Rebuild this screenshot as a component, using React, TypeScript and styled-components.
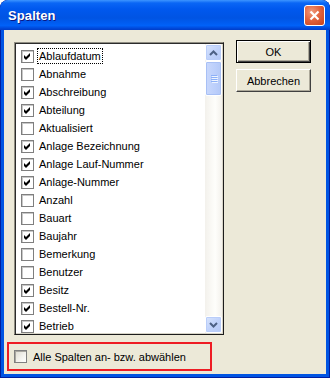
import React from "react";
import styled, { createGlobalStyle } from "styled-components";

const GlobalStyle = createGlobalStyle`
  html, body {
    margin: 0;
    padding: 0;
    background: #ffffff;
  }
  body {
    font-family: "Liberation Sans", Arial, sans-serif;
  }
`;

const COLUMNS = [
  { name: "Ablaufdatum", checked: true },
  { name: "Abnahme", checked: false },
  { name: "Abschreibung", checked: true },
  { name: "Abteilung", checked: true },
  { name: "Aktualisiert", checked: false },
  { name: "Anlage Bezeichnung", checked: true },
  { name: "Anlage Lauf-Nummer", checked: true },
  { name: "Anlage-Nummer", checked: true },
  { name: "Anzahl", checked: false },
  { name: "Bauart", checked: false },
  { name: "Baujahr", checked: true },
  { name: "Bemerkung", checked: false },
  { name: "Benutzer", checked: false },
  { name: "Besitz", checked: true },
  { name: "Bestell-Nr.", checked: true },
  { name: "Betrieb", checked: true },
];

const Window = styled.div`
  width: 330px;
  height: 378px;
  box-sizing: border-box;
  display: flex;
  flex-direction: column;
  background: #0054e3;
  border-radius: 8px 8px 0 0;
  padding: 0 4px 4px 4px;
  box-shadow: inset 1px 0 0 #001ea0, inset -1px 0 0 #001ea0, inset 0 -1px 0 #001ea0;
  overflow: hidden;
`;

const TitleBar = styled.div`
  height: 30px;
  margin: 0 -4px;
  padding: 0 5px 0 8px;
  display: flex;
  align-items: center;
  justify-content: space-between;
  background: linear-gradient(
    to bottom,
    #3d95ff 0%,
    #0a66f5 10%,
    #0058ee 30%,
    #0054e3 60%,
    #0061f8 85%,
    #0047d8 95%,
    #003dc8 100%
  );
  border-radius: 8px 8px 0 0;
`;

const Title = styled.span`
  color: #ffffff;
  font-size: 13px;
  font-weight: bold;
  text-shadow: 1px 1px 0 #0a1883;
  letter-spacing: 0.1px;
`;

const CloseButton = styled.div`
  width: 21px;
  height: 21px;
  box-sizing: border-box;
  border: 1px solid #ffffff;
  border-radius: 3px;
  background: radial-gradient(circle at 35% 30%, #f09a7c 0%, #e2643f 45%, #c7411a 100%);
  display: flex;
  align-items: center;
  justify-content: center;
`;

const Body = styled.div`
  flex: 1;
  background: #ece9d8;
  padding: 10px 0 0 3px;
  display: flex;
  flex-direction: column;
`;

const TopRow = styled.div`
  display: flex;
  align-items: flex-start;
  gap: 12px;
  padding-left: 7px;
`;

const ListBox = styled.div`
  margin-top: 2px;
  width: 210px;
  height: 293px;
  box-sizing: border-box;
  border: 1px solid #1c1c1c;
  border-top-color: #8f8d82;
  border-left-color: #8f8d82;
  box-shadow: inset 1px 1px 0 #2b2b2b, inset -1px -1px 0 #d8d5c8;
  background: #ffffff;
  display: flex;
  overflow: hidden;
  padding: 1px;
`;

const Items = styled.div`
  flex: 1;
  padding: 3px 0 0 5px;
  overflow: hidden;
`;

const Row = styled.div`
  height: 18px;
  display: flex;
  align-items: center;
  gap: 4px;
`;

const Box = styled.div`
  width: 13px;
  height: 13px;
  box-sizing: border-box;
  border: 1px solid #7f7f7f;
  background: #ffffff;
  box-shadow: inset 1px 1px 0 #c8c8c8;
  display: flex;
  align-items: center;
  justify-content: center;
  flex-shrink: 0;
`;

const Label = styled.span<{ $focused?: boolean }>`
  font-size: 11px;
  color: #000000;
  padding: 1px 1px;
  outline: ${(p) => (p.$focused ? "1px dotted #000" : "none")};
  outline-offset: 0px;
  white-space: nowrap;
`;

const ScrollBar = styled.div`
  width: 17px;
  display: flex;
  flex-direction: column;
  background: linear-gradient(to right, #f3f1ec, #fefefb 60%, #f3f1ec);
`;

const ScrollButton = styled.div`
  width: 17px;
  height: 17px;
  box-sizing: border-box;
  border: 1px solid #ffffff;
  border-radius: 2px;
  background: linear-gradient(135deg, #d9e5fd 0%, #c1d3fb 50%, #b4c8f6 100%);
  box-shadow: inset 0 0 0 1px #b9cdf9;
  display: flex;
  align-items: center;
  justify-content: center;
`;

const Track = styled.div`
  flex: 1;
  display: flex;
  flex-direction: column;
`;

const Thumb = styled.div`
  height: 35px;
  box-sizing: border-box;
  border: 1px solid #ffffff;
  border-radius: 2px;
  background: linear-gradient(to right, #c9d8fc 0%, #bccffb 60%, #b3c8f7 100%);
  box-shadow: inset 0 0 0 1px #a8c0f5;
  display: flex;
  flex-direction: column;
  align-items: center;
  justify-content: center;
  gap: 1px;
`;

const Grip = styled.div`
  width: 6px;
  height: 1px;
  background: #8cb0f8;
  box-shadow: 1px 1px 0 #eef4fe;
`;

const Buttons = styled.div`
  display: flex;
  flex-direction: column;
  gap: 6px;
`;

const Button = styled.div<{ $default?: boolean }>`
  width: 75px;
  height: 23px;
  box-sizing: border-box;
  display: flex;
  align-items: center;
  justify-content: center;
  font-size: 11px;
  color: #000000;
  background: #ece9d8;
  border: 1px solid ${(p) => (p.$default ? "#000000" : "#ffffff")};
  border-right-color: ${(p) => (p.$default ? "#000000" : "#404040")};
  border-bottom-color: ${(p) => (p.$default ? "#000000" : "#404040")};
  box-shadow: ${(p) =>
    p.$default
      ? "inset 1px 1px 0 #ffffff, inset -1px -1px 0 #404040, inset -2px -2px 0 #aca899"
      : "inset -1px -1px 0 #aca899"};
`;

const SelectAll = styled.div`
  margin-top: 7px;
  width: 205px;
  height: 29px;
  box-sizing: border-box;
  border: 2px solid #ee1c24;
  display: flex;
  align-items: center;
  gap: 5px;
  padding: 0 0 0 5px;
`;

const AllBox = styled(Box)`
  border-color: #808080;
  background: linear-gradient(135deg, #dcdad0 0%, #f4f3ee 60%, #ffffff 100%);
  box-shadow: inset 1px 1px 0 #a9a7a0;
`;

const Check = () => (
  <svg width="11" height="11" viewBox="0 0 11 11">
    <polygon points="2,4 4,6 8,2 8,5 4,9 2,7" fill="#000" />
  </svg>
);

const Chevron = ({ up }: { up?: boolean }) => (
  <svg width="9" height="6" viewBox="0 0 9 6">
    <polyline
      points={up ? "1,5 4.5,1.5 8,5" : "1,1 4.5,4.5 8,1"}
      fill="none"
      stroke="#4d6185"
      strokeWidth="2"
    />
  </svg>
);

const App = () => (
  <>
    <GlobalStyle />
    <Window>
      <TitleBar>
        <Title>Spalten</Title>
        <CloseButton>
          <svg width="11" height="11" viewBox="0 0 11 11">
            <path d="M1.5 1.5 L9.5 9.5 M9.5 1.5 L1.5 9.5" stroke="#fff" strokeWidth="2.2" />
          </svg>
        </CloseButton>
      </TitleBar>
      <Body>
        <TopRow>
          <ListBox>
            <Items>
              {COLUMNS.map((c, i) => (
                <Row key={c.name}>
                  <Box>{c.checked && <Check />}</Box>
                  <Label $focused={i === 0}>{c.name}</Label>
                </Row>
              ))}
            </Items>
            <ScrollBar>
              <ScrollButton>
                <Chevron up />
              </ScrollButton>
              <Track>
                <Thumb>
                  <Grip />
                  <Grip />
                  <Grip />
                  <Grip />
                </Thumb>
              </Track>
              <ScrollButton>
                <Chevron />
              </ScrollButton>
            </ScrollBar>
          </ListBox>
          <Buttons>
            <Button $default>OK</Button>
            <Button>Abbrechen</Button>
          </Buttons>
        </TopRow>
        <SelectAll>
          <AllBox />
          <Label>Alle Spalten an- bzw. abwählen</Label>
        </SelectAll>
      </Body>
    </Window>
  </>
);

export default App;
